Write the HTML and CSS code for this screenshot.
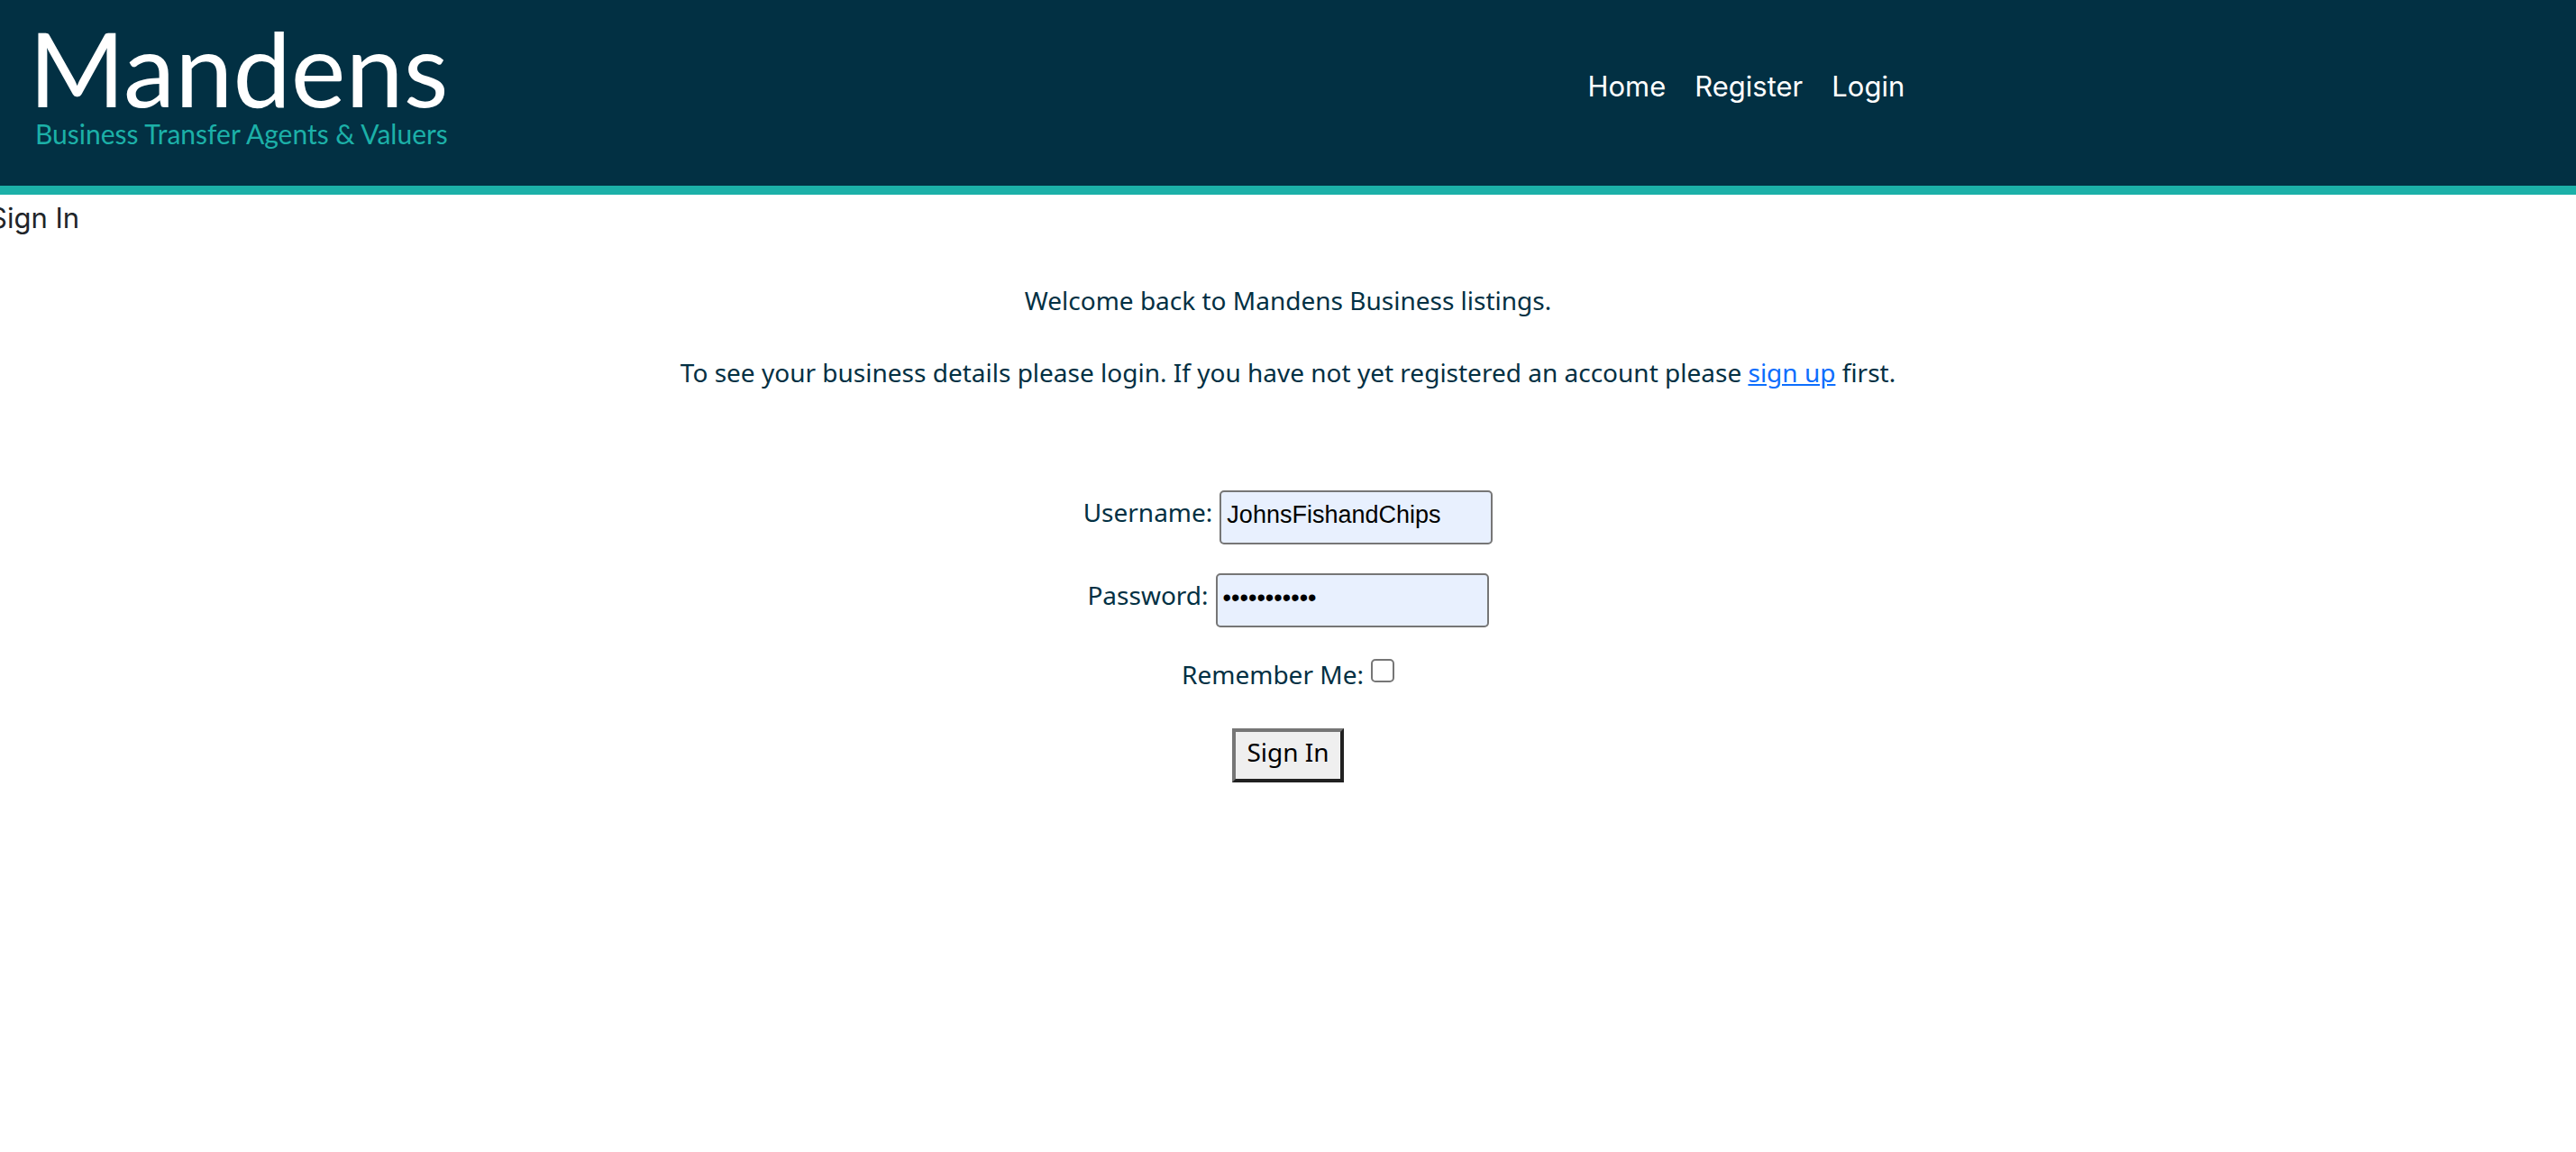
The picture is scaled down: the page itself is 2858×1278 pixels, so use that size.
FILE: index.html
```html
<!DOCTYPE html>
<html lang="en">
<head>
<meta charset="utf-8">
<title>Mandens - Sign In</title>
<link rel="stylesheet" href="styles.css">
</head>
<body>
<header class="site-header">
  <div class="brand">
    <span class="brand-name">Mandens</span>
    <span class="brand-tagline">Business Transfer Agents &amp; Valuers</span>
  </div>
  <nav class="site-nav">
    <a href="#">Home</a>
    <a href="#">Register</a>
    <a href="#">Login</a>
  </nav>
</header>
<main>
  <div class="page-title">Sign In</div>
  <section class="intro">
    <p>Welcome back to Mandens Business listings.</p>
    <p>To see your business details please login. If you have not yet registered an account please <a href="#">sign up</a> first.</p>
  </section>
  <form class="login-form">
    <div class="field">
      <label for="username">Username:</label>
      <input class="text-input" id="username" type="text" value="JohnsFishandChips">
    </div>
    <div class="field">
      <label for="password">Password:</label>
      <input class="text-input" id="password" type="password" value="fishandchip">
    </div>
    <div class="field field-remember">
      <label for="remember">Remember Me:</label>
      <input class="check-input" id="remember" type="checkbox">
    </div>
    <button class="submit" type="button">Sign In</button>
  </form>
</main>
</body>
</html>
```
FILE: styles.css
```css
* {
  box-sizing: border-box;
}

body {
  margin: 0;
  background: #fff;
  color: #212529;
  font-family: Inter, "Liberation Sans", sans-serif;
  font-size: 31px;
  line-height: 48px;
}

.site-header {
  display: grid;
  grid-template-columns: 61% 1fr;
  align-items: start;
  min-height: 216px;
  background: #023043;
  border-bottom: 10px solid #1cb0a8;
}

.brand {
  display: flex;
  flex-direction: column;
  padding: 18px 0 0 32px;
  font-family: Lato, sans-serif;
}

.brand-name {
  color: #fff;
  font-size: 115px;
  line-height: 112px;
}

.brand-tagline {
  padding-left: 7px;
  color: #1cb0a8;
  font-size: 30px;
  line-height: 36px;
}

.site-nav {
  display: flex;
  gap: 32px;
  padding: 72px 18px 0;
}

.site-nav a {
  color: #fff;
  text-decoration: none;
}

.page-title {
  margin-left: -12px;
  padding-top: 2px;
}

.intro,
.login-form {
  color: #023043;
  font-family: "Noto Sans", sans-serif;
  font-size: 28px;
  text-align: center;
}

.intro {
  padding-top: 43px;
}

.intro p {
  margin: 0 0 32px;
}

.intro a {
  color: #0d6efd;
}

.login-form {
  display: flex;
  flex-direction: column;
  align-items: center;
  gap: 32px;
  padding-top: 75px;
}

.field {
  display: flex;
  gap: 8px;
}

.text-input {
  width: 303px;
  height: 60px;
  padding: 2px 6px 8px;
  border: 2px solid #767676;
  border-radius: 5px;
  background: #e8f0fe;
  color: #000;
  font-family: "Liberation Sans", sans-serif;
  font-size: 27px;
}

.field-remember {
  padding-bottom: 8px;
  line-height: 40px;
}

.check-input {
  appearance: none;
  width: 26px;
  height: 26px;
  margin: 3px 0 0;
  border: 2px solid #767676;
  border-radius: 5px;
  background: #fff;
}

.submit {
  padding: 0 12px 8px;
  border: 4px outset #767676;
  background: #efefef;
  color: #000;
  font: inherit;
  line-height: 44px;
}
```
